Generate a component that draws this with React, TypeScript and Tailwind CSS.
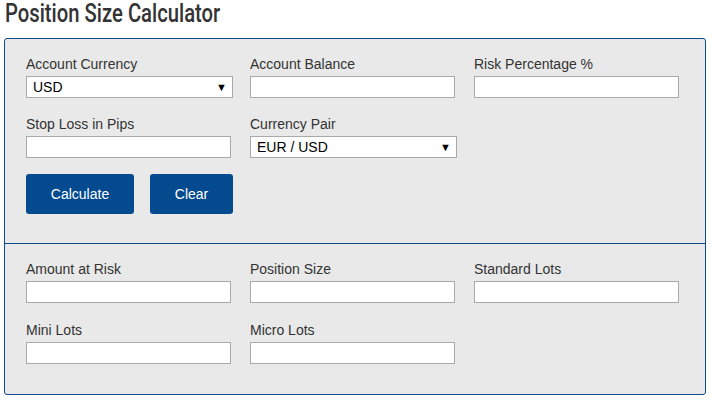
import { useState } from "react";

const fieldCls =
  "block h-[22px] border border-[#a9a9a9] bg-white px-1.5 text-[14px] text-black focus:outline-none";

function Field({ label, value, onChange }: { label: string; value?: string; onChange?: (v: string) => void }) {
  return (
    <div>
      <label className="mb-[2px] block text-[14px] leading-5 text-[#333]">{label}</label>
      <input
        className={`${fieldCls} w-[205px]`}
        value={value ?? ""}
        onChange={e => onChange?.(e.target.value)}
        readOnly={!onChange}
      />
    </div>
  );
}

function SelectField({
  label,
  value,
  options,
  onChange,
}: {
  label: string;
  value: string;
  options: string[];
  onChange: (v: string) => void;
}) {
  return (
    <div>
      <label className="mb-[2px] block text-[14px] leading-5 text-[#333]">{label}</label>
      <div className="relative w-[207px]">
        <select
          className={`${fieldCls} w-full appearance-none pl-[6px] pr-6 leading-5`}
          value={value}
          onChange={e => onChange(e.target.value)}
        >
          {options.map(o => (
            <option key={o}>{o}</option>
          ))}
        </select>
        <span className="pointer-events-none absolute right-[6px] top-[5px] text-[11px] leading-3 text-black">▼</span>
      </div>
    </div>
  );
}

export default function App() {
  const [currency, setCurrency] = useState("USD");
  const [pair, setPair] = useState("EUR / USD");
  const [balance, setBalance] = useState("");
  const [risk, setRisk] = useState("");
  const [stop, setStop] = useState("");

  return (
    <div className="bg-white px-[4px] pb-2 font-['Liberation_Sans',Arial,sans-serif]">
      {/* Title */}
      <div className="h-[38px] pl-[1px]">
        <h1 className="inline-block origin-left scale-x-[0.81] font-['Roboto',sans-serif] text-[25px] font-medium leading-[28px] text-[#333]">
          Position Size Calculator
        </h1>
      </div>

      <div className="w-[702px] rounded-[3px] border border-[#0f4c8c] bg-[#e9e9e9]">
        {/* Inputs */}
        <div className="border-b border-[#0f4c8c] pl-[21px] pt-[15px] pb-[29px]">
          <div className="grid grid-cols-[224px_224px_224px] gap-y-[16px]">
            <SelectField label="Account Currency" value={currency} options={["USD", "EUR", "GBP", "JPY"]} onChange={setCurrency} />
            <Field label="Account Balance" value={balance} onChange={setBalance} />
            <Field label="Risk Percentage %" value={risk} onChange={setRisk} />
            <Field label="Stop Loss in Pips" value={stop} onChange={setStop} />
            <SelectField
              label="Currency Pair"
              value={pair}
              options={["EUR / USD", "GBP / USD", "USD / JPY", "AUD / USD"]}
              onChange={setPair}
            />
          </div>
          <div className="mt-[16px] flex gap-[16px]">
            <button className="h-[40px] w-[108px] rounded-[3px] bg-[#034a8f] text-[14px] text-white">Calculate</button>
            <button
              className="h-[40px] w-[83px] rounded-[3px] bg-[#034a8f] text-[14px] text-white"
              onClick={() => {
                setBalance("");
                setRisk("");
                setStop("");
              }}
            >
              Clear
            </button>
          </div>
        </div>

        {/* Results */}
        <div className="pl-[21px] pt-[15px] pb-[30px]">
          <div className="grid grid-cols-[224px_224px_224px] gap-y-[17px]">
            <Field label="Amount at Risk" />
            <Field label="Position Size" />
            <Field label="Standard Lots" />
            <Field label="Mini Lots" />
            <Field label="Micro Lots" />
          </div>
        </div>
      </div>
    </div>
  );
}
